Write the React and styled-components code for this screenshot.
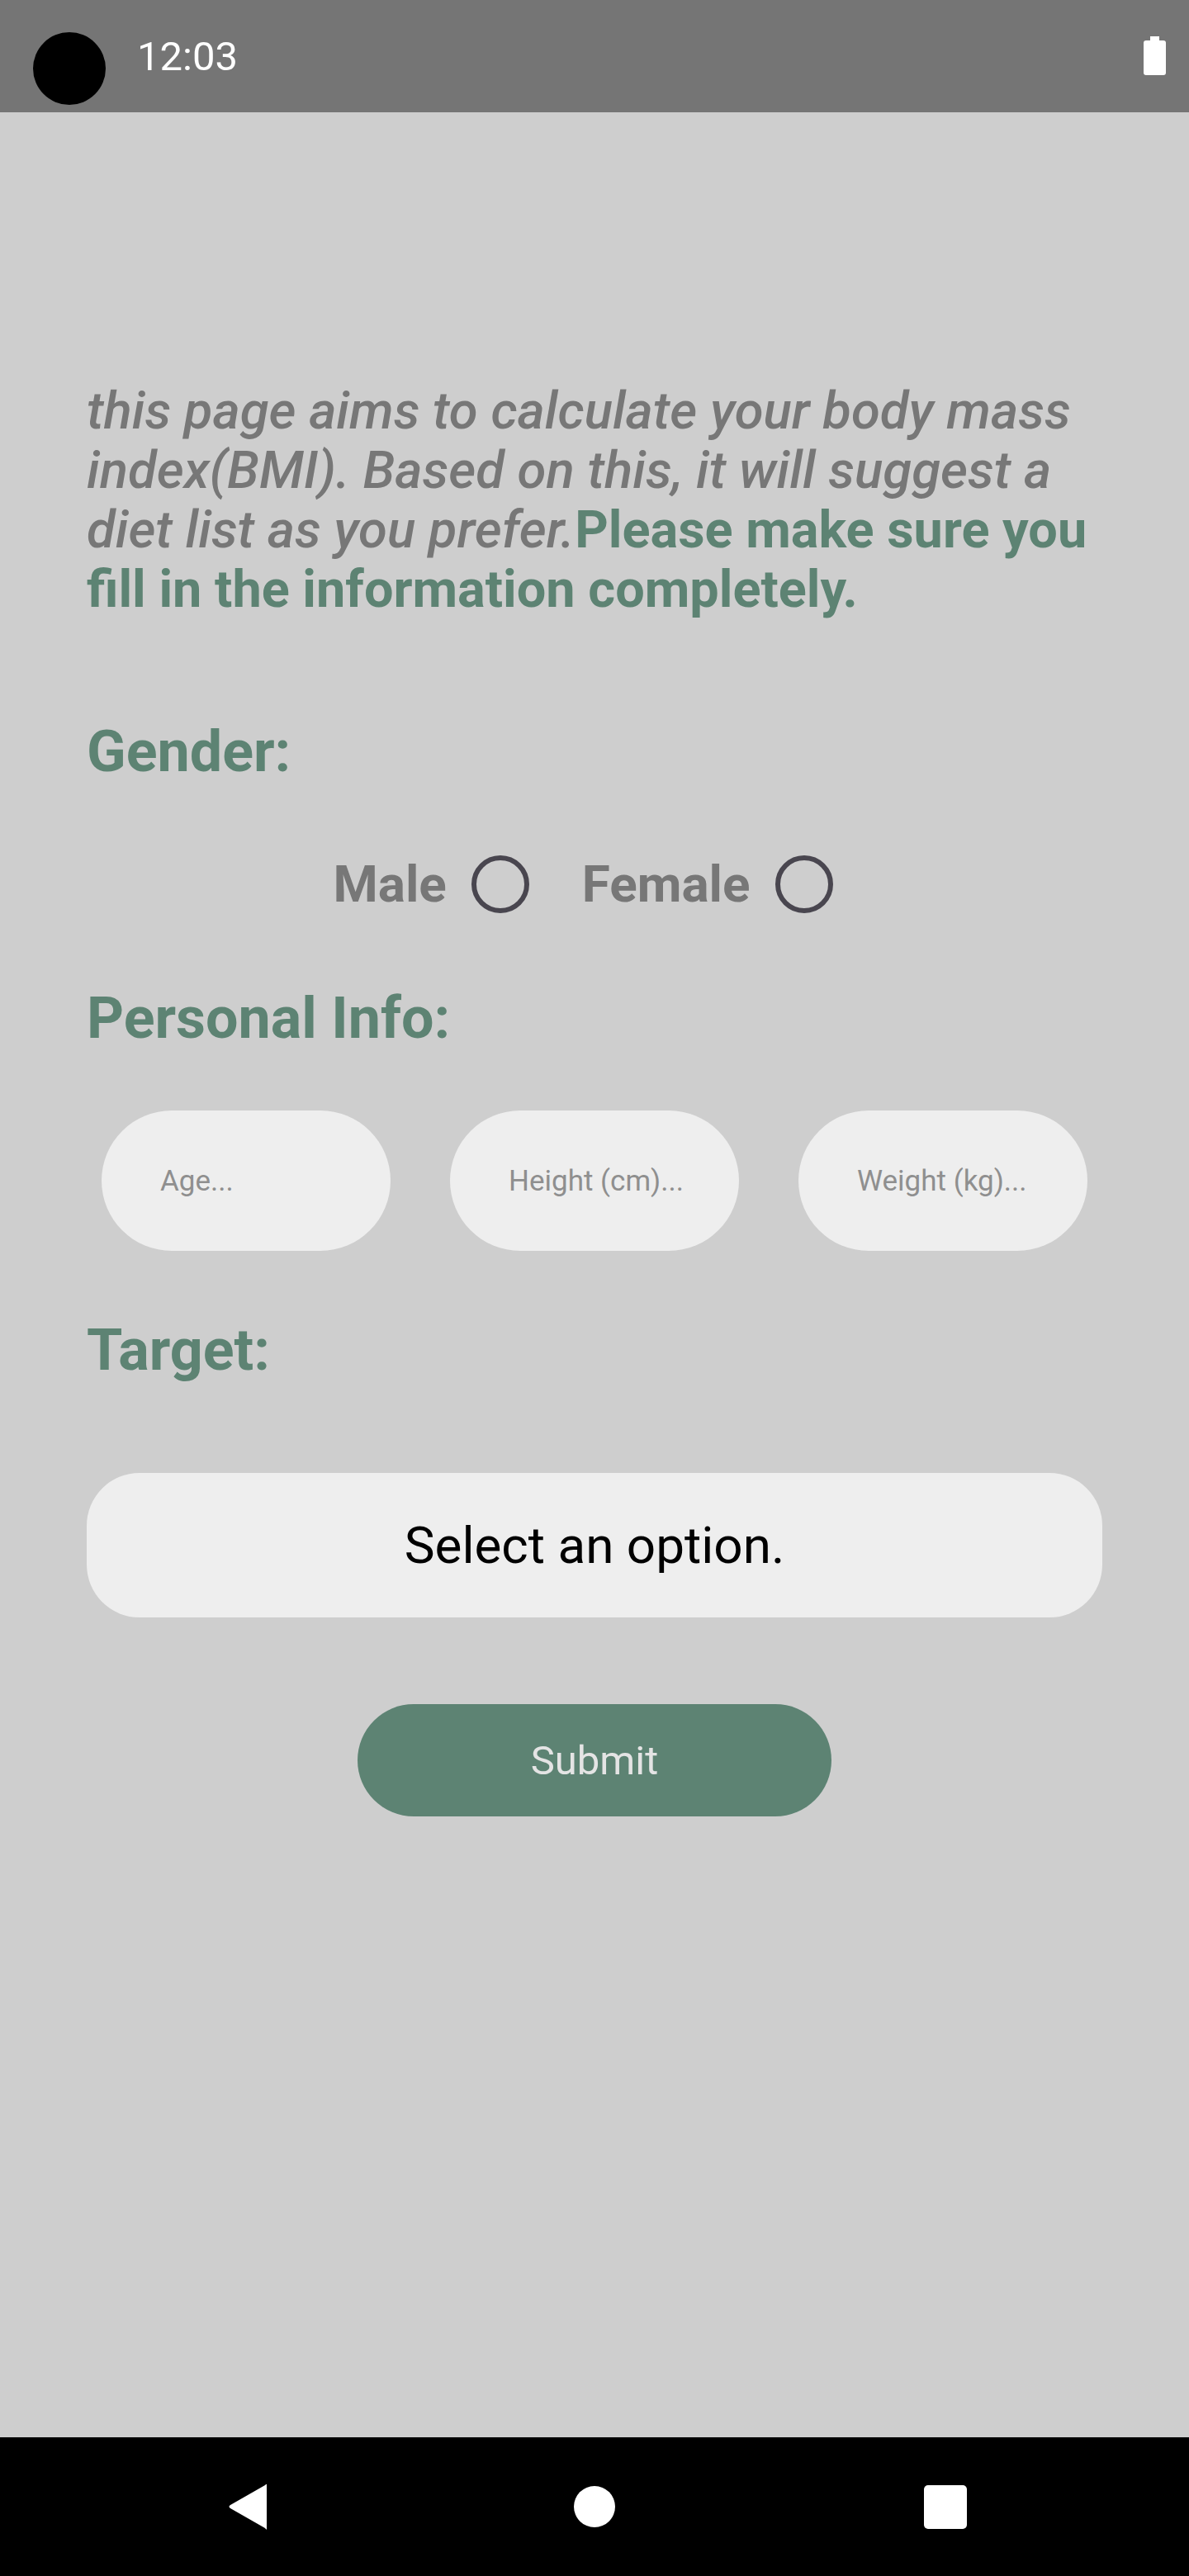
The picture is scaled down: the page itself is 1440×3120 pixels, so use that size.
import React from 'react';
import styled, { createGlobalStyle } from 'styled-components';

const GlobalStyle = createGlobalStyle`
  html, body {
    margin: 0;
    padding: 0;
    background: #cecece;
  }
  body {
    font-family: Roboto, "Noto Sans", "Liberation Sans", sans-serif;
  }
`;

const Screen = styled.div`
  width: 1440px;
  min-height: 3120px;
  display: flex;
  flex-direction: column;
  background: #cecece;
`;

const StatusBar = styled.div`
  height: 136px;
  background: #757575;
  display: flex;
  align-items: center;
  padding: 0 28px 0 40px;
  box-sizing: border-box;
`;

const Camera = styled.div`
  width: 88px;
  height: 88px;
  margin-top: 30px;
  border-radius: 50%;
  background: #000;
`;

const Time = styled.span`
  margin-left: 38px;
  font-size: 49px;
  color: #fff;
  flex: 1;
`;

const Battery = styled.div`
  position: relative;
  width: 27px;
  height: 42px;
  margin-top: 4px;
  background: #fff;
  border-radius: 3px;

  &::before {
    content: '';
    position: absolute;
    top: -5px;
    left: 8px;
    width: 11px;
    height: 6px;
    background: #fff;
  }
`;

const Main = styled.main`
  flex: 1;
  padding: 326px 105px 0;
  display: flex;
  flex-direction: column;
`;

const Intro = styled.p`
  margin: 0;
  font-size: 63.5px;
  line-height: 72px;
  font-style: italic;
  font-weight: 500;
  color: #777777;

  strong {
    font-style: normal;
    font-weight: 700;
    font-size: 63px;
    color: #5d8373;
  }
`;

const Heading = styled.h2`
  margin: ${p => p.$top}px 0 0;
  font-size: 70px;
  line-height: 84px;
  font-weight: 700;
  color: #5d8373;
`;

const RadioRow = styled.div`
  margin-top: 82px;
  display: flex;
  justify-content: center;
  align-items: center;
  gap: 64px;
  padding-right: 28px;
`;

const RadioOption = styled.label`
  display: flex;
  align-items: center;
  gap: 30px;
  font-size: 62px;
  font-weight: 700;
  color: #777777;
`;

const RadioCircle = styled.span`
  width: 70px;
  height: 70px;
  box-sizing: border-box;
  border: 6px solid #49464f;
  border-radius: 50%;
`;

const InputRow = styled.div`
  margin-top: 70px;
  padding: 0 18px;
  display: flex;
  justify-content: space-between;
`;

const Field = styled.input`
  width: 350px;
  height: 170px;
  box-sizing: border-box;
  border: none;
  border-radius: 85px;
  background: #eeeeee;
  padding: 0 0 0 71px;
  font-family: inherit;
  font-size: 35px;
  color: #333;
  outline: none;

  &::placeholder {
    color: #8f8f8f;
  }
`;

const Select = styled.div`
  margin-top: 107px;
  height: 175px;
  border-radius: 64px;
  background: #eeeeee;
  display: flex;
  align-items: center;
  justify-content: center;
  font-size: 62px;
  color: #000;
`;

const Submit = styled.button`
  margin: 105px auto 0;
  width: 574px;
  height: 136px;
  border: none;
  border-radius: 68px;
  background: #5d8373;
  color: #e4e4e4;
  font-family: inherit;
  font-size: 49px;
`;

const NavBar = styled.div`
  height: 168px;
  background: #000;
  display: grid;
  grid-template-columns: repeat(3, 420px);
  justify-content: center;
  align-items: center;
  justify-items: center;
`;

const NavCircle = styled.div`
  width: 50px;
  height: 50px;
  border-radius: 50%;
  background: #fff;
`;

const NavSquare = styled.div`
  width: 52px;
  height: 53px;
  margin-left: 10px;
  border-radius: 5px;
  background: #fff;
`;

function BackIcon() {
  return (
    <svg width="48" height="58" viewBox="0 0 48 58">
      <path d="M47 2 L47 56 Q47 58 45 55 L3 31 Q0 29 3 27 L45 3 Q47 1 47 2 Z" fill="#fff" />
    </svg>
  );
}

export default function App() {
  return (
    <>
      <GlobalStyle />
      <Screen>
        <StatusBar>
          <Camera />
          <Time>12:03</Time>
          <Battery />
        </StatusBar>
        <Main>
          <Intro>
            this page aims to calculate your body mass index(BMI). Based on this, it will suggest a diet list as you prefer.<strong>Please make sure you fill in the information completely.</strong>
          </Intro>
          <Heading $top={118}>Gender:</Heading>
          <RadioRow>
            <RadioOption>Male <RadioCircle /></RadioOption>
            <RadioOption>Female <RadioCircle /></RadioOption>
          </RadioRow>
          <Heading $top={84}>Personal Info:</Heading>
          <InputRow>
            <Field placeholder="Age..." />
            <Field placeholder="Height (cm)..." />
            <Field placeholder="Weight (kg)..." />
          </InputRow>
          <Heading $top={78}>Target:</Heading>
          <Select>Select an option.</Select>
          <Submit>Submit</Submit>
        </Main>
        <NavBar>
          <BackIcon />
          <NavCircle />
          <NavSquare />
        </NavBar>
      </Screen>
    </>
  );
}
